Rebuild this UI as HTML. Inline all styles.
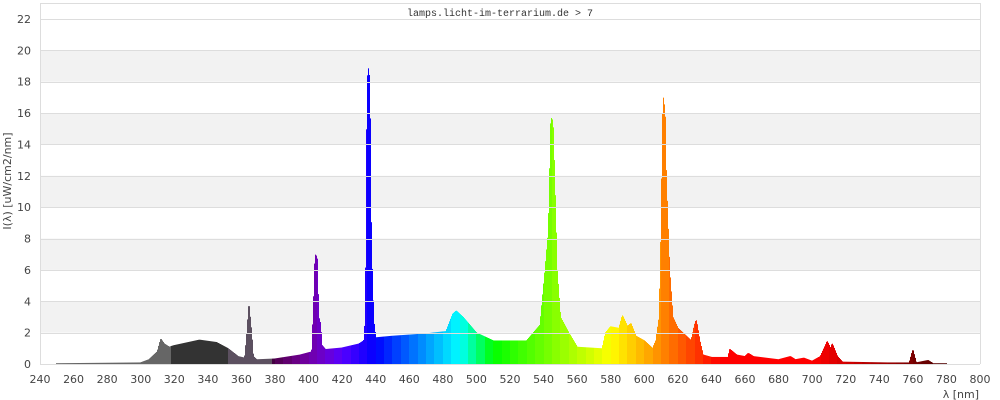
<!DOCTYPE html>
<html><head><meta charset="utf-8"><style>
html,body{margin:0;padding:0;background:#fff;width:1000px;height:400px;overflow:hidden}
svg text{font-family:"DejaVu Sans","Liberation Sans",sans-serif;font-size:11px;fill:#444}
</style></head><body>
<svg id="s" width="1000" height="400" xmlns="http://www.w3.org/2000/svg">
<g id="bg"></g>
<g id="bars"></g>
<g id="ax"></g>
<text x="500" y="16" text-anchor="middle" style="font-family:'Liberation Mono',monospace;font-size:10px;fill:#333">lamps.licht-im-terrarium.de &gt; 7</text>
<text transform="translate(11,181) rotate(-90)" text-anchor="middle">I(λ)  [uW/cm2/nm]</text>
<text x="979" y="398" text-anchor="end">λ [nm]</text>
</svg>
<script>
var X0=40,X1=980,Y0=364,YT=19;
function xp(n){return X0+(n-240)*(X1-X0)/560}
function yp(v){return Y0-v*(Y0-YT)/22}
var NS="http://www.w3.org/2000/svg";
function el(p,t,a){var e=document.createElementNS(NS,t);for(var k in a)e.setAttribute(k,a[k]);document.getElementById(p).appendChild(e);return e}
for(var v=2;v<22;v+=4){el("bg","rect",{x:X0,y:yp(v+2),width:X1-X0,height:yp(v)-yp(v+2),fill:"#f2f2f2"})}
for(var v=2;v<=22;v+=2){el("ax","line",{x1:X0,x2:X1,y1:Math.round(yp(v))+.5,y2:Math.round(yp(v))+.5,stroke:"#ddd"})}
el("ax","line",{x1:X0,x2:X1,y1:3.5,y2:3.5,stroke:"#ddd"});
el("ax","line",{x1:X0+.5,x2:X0+.5,y1:3,y2:Y0,stroke:"#ddd"});
el("ax","line",{x1:X1+.5,x2:X1+.5,y1:3,y2:Y0,stroke:"#ddd"});
el("ax","line",{x1:X0,x2:X1,y1:Y0+.5,y2:Y0+.5,stroke:"#ddd"});
for(var v=0;v<=22;v+=2){var t=el("ax","text",{x:31,y:yp(v)+4,"text-anchor":"end"});t.textContent=v}
for(var n=240;n<=800;n+=20){var t=el("ax","text",{x:xp(n),y:383,"text-anchor":"middle"});t.textContent=n}
var P=[[250,.05],[300,.1],[305,.3],[310,.8],[312,1.6],[314,1.3],[317,1.1],[320,1.2],[335,1.55],[345,1.4],[352,1.0],[358,.5],[362,.4],[363,1.5],[364.5,3.7],[366,2],[367,.5],[369,.3],[380,.35],[395,.6],[402,.8],[403,3.5],[404,7],[405,6.8],[406,3],[407,2.6],[408,1.2],[410,.95],[420,1.05],[430,1.3],[433,1.5],[434,3],[435,17.8],[435.8,19],[436.5,17],[437,10],[438,5],[439,2.5],[440,1.7],[450,1.8],[470,1.95],[482,2.1],[486,3.2],[488,3.4],[492,3.0],[500,2.0],[510,1.5],[530,1.5],[538,2.5],[541,6],[543,8.5],[544.5,15.7],[545.5,15.5],[546.5,12],[548,6],[550,3],[555,2.0],[560,1.1],[575,1.0],[577,2.0],[580,2.4],[585,2.3],[587,3.1],[590,2.4],[592,2.6],[595,1.8],[600,1.5],[602,1.3],[605,1.0],[607,1.5],[609,3],[610,8],[611.3,17],[612.3,16],[613,12],[615,6],[617,3],[620,2.3],[625,1.8],[628,1.5],[630,2.5],[631,2.8],[633,1.5],[635,.6],[640,.45],[650,.45],[651,.95],[655,.6],[660,.5],[662,.7],[665,.5],[680,.3],[687,.5],[690,.3],[695,.4],[700,.2],[705,.5],[708,1.2],[709,1.45],[711,1.0],[712,1.3],[715,.5],[718,.15],[745,.1],[758,.1],[760,.9],[762,.1],[769,.25],[772,.05],[780,.05]];
function val(n){if(n<P[0][0]||n>780)return 0;for(var i=1;i<P.length;i++){if(n<=P[i][0]){var a=P[i-1],b=P[i];return a[1]+(b[1]-a[1])*(n-a[0])/(b[0]-a[0])}}return 0}
function col(n){
 if(n<318)return "#666";if(n<352)return "#333";if(n<378)return "#5c5060";
 var w=Math.floor(n/5)*5+2.5,r=0,g=0,b=0;
 if(w<440){r=-(w-440)/60;b=1}else if(w<490){g=(w-440)/50;b=1}else if(w<510){g=1;b=-(w-510)/20}else if(w<580){r=(w-510)/70;g=1}else if(w<645){r=1;g=-(w-645)/65}else{r=1}
 var f=1;if(w<420)f=.3+.7*(w-380)/40;else if(w>700)f=.3+.7*(780-w)/80;
 return "rgb("+Math.round(255*r*f)+","+Math.round(255*g*f)+","+Math.round(255*b*f)+")"}
var k=560/(X1-X0);
for(var px=X0;px<X1;px++){var n0=240+(px-X0)*k,v=0;for(var s=0;s<=4;s++){v=Math.max(v,val(n0+s*k/4))}if(v<=0)continue;var n=n0+k/2;var y=yp(v);el("bars","rect",{x:px,y:y,width:1,height:Y0-y,fill:col(n)})}
</script>
</body></html>
